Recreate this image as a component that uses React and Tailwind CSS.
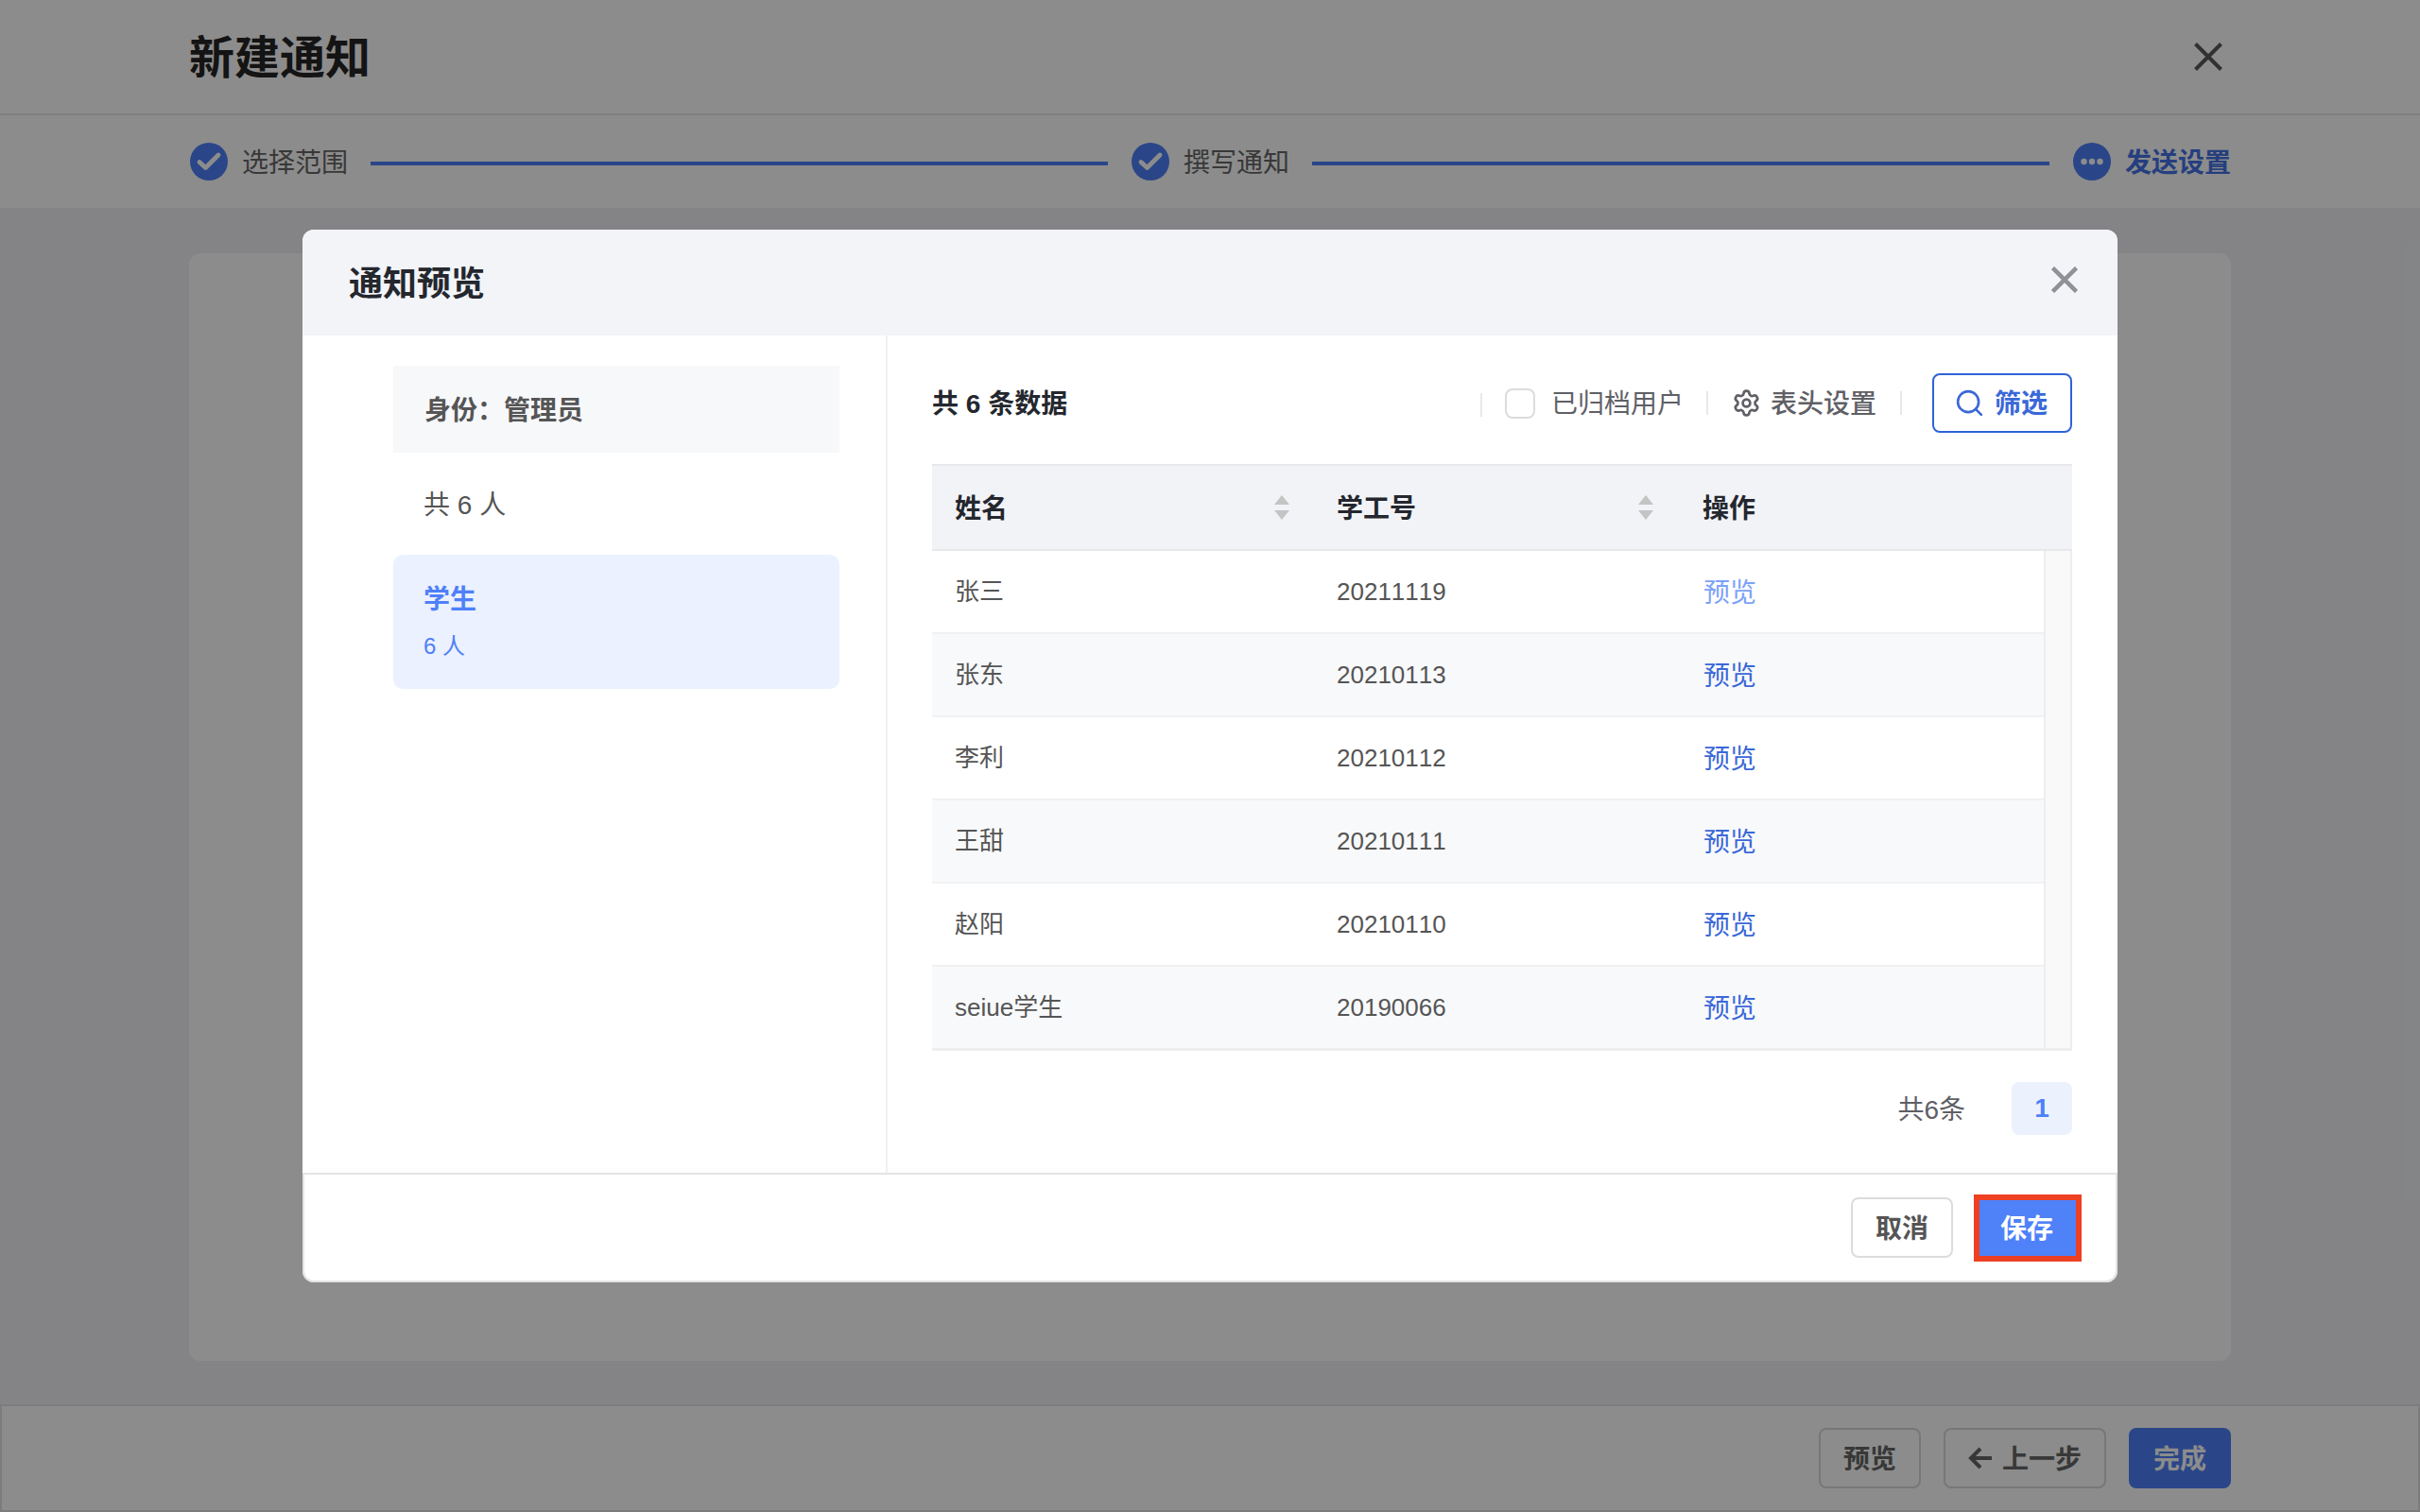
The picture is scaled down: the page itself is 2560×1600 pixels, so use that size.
import React from "react";
import { Settings, Search } from "lucide-react";

function CheckDot() {
  return (
    <svg width="40" height="40" viewBox="0 0 40 40" className="shrink-0">
      <circle cx="20" cy="20" r="20" fill="#4e80f8" />
      <path d="M10 20.5 L16.5 26.5 L30 13" fill="none" stroke="#fff" strokeWidth="4.8" strokeLinecap="round" strokeLinejoin="round" />
    </svg>
  );
}

function DotsDot() {
  return (
    <svg width="40" height="40" viewBox="0 0 40 40" className="shrink-0">
      <circle cx="20" cy="20" r="20" fill="#4e80f8" />
      <circle cx="11.5" cy="20" r="3.2" fill="#fff" />
      <circle cx="20" cy="20" r="3.2" fill="#fff" />
      <circle cx="28.5" cy="20" r="3.2" fill="#fff" />
    </svg>
  );
}

function Cross({ size, color, width }) {
  return (
    <svg width={size} height={size} viewBox={`0 0 ${size} ${size}`} className="shrink-0">
      <path d={`M1.5 1.5 L${size - 1.5} ${size - 1.5} M${size - 1.5} 1.5 L1.5 ${size - 1.5}`} stroke={color} strokeWidth={width} fill="none" />
    </svg>
  );
}

function SortIcon() {
  return (
    <svg width="16" height="26" viewBox="0 0 16 26" className="shrink-0">
      <path d="M8 0 L16 10 L0 10 Z" fill="#c4c4c4" />
      <path d="M8 26 L16 16 L0 16 Z" fill="#c4c4c4" />
    </svg>
  );
}

const rows = [
  ["张三", "20211119"],
  ["张东", "20210113"],
  ["李利", "20210112"],
  ["王甜", "20210111"],
  ["赵阳", "20210110"],
  ["seiue学生", "20190066"],
];

export default function App() {
  return (
    <div lang="zh-CN" className="font-[Liberation_Sans,Noto_Sans_CJK_SC,sans-serif] [font-kerning:none] relative h-[1600px] w-[2560px] overflow-hidden flex flex-col bg-white">
      {/* page header */}
      <div className="h-[122px] shrink-0 border-b-2 border-[#e7e7e7] flex items-center justify-between pl-[200px] pr-[209px]">
        <div className="pt-[3px] text-[48px] leading-none font-bold text-[#262626]">新建通知</div>
        <Cross size={30} color="#5a5a5a" width={4} />
      </div>

      {/* steps */}
      <div className="h-[98px] shrink-0 flex items-center pl-[201px] pr-[200px]">
        <CheckDot />
        <span className="ml-[15px] pt-[3px] text-[28px] text-[#666] whitespace-nowrap">选择范围</span>
        <div className="flex-1 h-[4px] mt-[4px] ml-[24px] mr-[25px] bg-[#4e80f8]" />
        <CheckDot />
        <span className="ml-[15px] pt-[3px] text-[28px] text-[#666] whitespace-nowrap">撰写通知</span>
        <div className="flex-1 h-[4px] mt-[4px] ml-[24px] mr-[25px] bg-[#4e80f8]" />
        <DotsDot />
        <span className="ml-[15px] pt-[3px] text-[28px] font-bold text-[#4474e6] whitespace-nowrap">发送设置</span>
      </div>

      {/* main */}
      <div className="flex-1 bg-[#f0f1f4] px-[200px] pt-[48px] pb-[46px]">
        <div className="h-full bg-white rounded-[12px]" />
      </div>

      {/* bottom bar */}
      <div className="h-[114px] shrink-0 border-2 border-[#e2e2e2] flex items-center justify-end gap-[24px] pr-[198px]">
        <div className="w-[108px] h-[64px] pt-[3px] rounded-[8px] border-2 border-[#d9d9d9] flex items-center justify-center text-[28px] font-bold text-[#666]">预览</div>
        <div className="w-[172px] h-[64px] rounded-[8px] border-2 border-[#d9d9d9] flex items-center justify-center gap-[10px] text-[28px] font-bold text-[#666]">
          <svg width="26" height="26" viewBox="0 0 26 26" className="shrink-0">
            <path d="M13 3 L3 13 L13 23 M3 13 L25 13" fill="none" stroke="#666" strokeWidth="4" />
          </svg>
          <span className="pt-[3px]">上一步</span>
        </div>
        <div className="w-[108px] h-[64px] pt-[3px] rounded-[8px] bg-[#4e80f8] flex items-center justify-center text-[28px] font-bold text-white">完成</div>
      </div>

      {/* overlay + modal */}
      <div className="absolute inset-0 bg-black/45 flex items-center justify-center">
        <div className="w-[1920px] h-[1114px] bg-white rounded-[12px] overflow-hidden flex flex-col">
          {/* modal head */}
          <div className="h-[112px] shrink-0 bg-[#f2f4f8] flex items-center justify-between pl-[49px] pr-[42px]">
            <div className="pt-[3px] text-[36px] leading-none font-bold text-[#24272e]">通知预览</div>
            <div className="-mt-[6px]"><Cross size={28} color="#8f9196" width={4.5} /></div>
          </div>

          {/* modal body */}
          <div className="flex-1 flex min-h-0">
            <div className="w-[619px] shrink-0 border-r-2 border-[#f0f0f2] pl-[96px] pt-[32px]">
              <div className="w-[472px] h-[92px] pt-[3px] bg-[#f7f8fa] flex items-center pl-[33px] text-[28px] font-bold text-[#555]">身份：管理员</div>
              <div className="w-[472px] h-[108px] pt-[3px] flex items-center pl-[32px] text-[28px] text-[#555]">共 6 人</div>
              <div className="w-[472px] h-[142px] rounded-[10px] bg-[#ebf1fe] pl-[32px] pt-[28px]">
                <div className="text-[28px] leading-[40px] font-bold text-[#4e80f8]">学生</div>
                <div className="mt-[12px] text-[24px] leading-[34px] text-[#4e80f8]">6 人</div>
              </div>
            </div>

            <div className="flex-1 pl-[47px] pr-[48px] pt-[40px]">
              {/* toolbar */}
              <div className="h-[63px] flex items-center justify-between">
                <div className="pt-[3px] text-[28px] font-bold text-[#24272e]">共 6 条数据</div>
                <div className="flex items-center">
                  <div className="w-[2px] h-[25px] bg-[#e8e8e8] mt-[4px]" />
                  <div className="ml-[24px] w-[32px] h-[32px] rounded-[8px] border-2 border-[#dcdcdc] bg-white" />
                  <span className="ml-[17px] pt-[3px] text-[28px] text-[#5f6066] whitespace-nowrap">已归档用户</span>
                  <div className="ml-[24px] w-[2px] h-[25px] bg-[#e8e8e8]" />
                  <Settings size={31} strokeWidth={2.1} color="#5f6066" className="ml-[25px] shrink-0" />
                  <span className="ml-[10px] pt-[3px] text-[28px] font-medium text-[#5f6066] whitespace-nowrap">表头设置</span>
                  <div className="ml-[25px] w-[2px] h-[25px] bg-[#e8e8e8]" />
                  <div className="ml-[32px] w-[148px] h-[63px] rounded-[8px] border-2 border-[#2f63d6] flex items-center pl-[21px] gap-[10px]">
                    <Search size={33} strokeWidth={1.9} color="#3a68d8" className="shrink-0" />
                    <span className="pt-[3px] text-[28px] font-bold text-[#3a68d8]">筛选</span>
                  </div>
                </div>
              </div>

              {/* table */}
              <div className="mt-[33px] w-[1206px]">
                <div className="h-[92px] bg-[#f2f3f7] border-y-2 border-[#e8e8ea] flex items-center text-[28px] font-bold text-[#24272e]">
                  <div className="w-[404px] pl-[24px] pr-[26px] flex items-center justify-between">
                    <span className="pt-[3px]">姓名</span>
                    <SortIcon />
                  </div>
                  <div className="w-[388px] pl-[24px] pr-[29px] flex items-center justify-between">
                    <span className="pt-[3px]">学工号</span>
                    <SortIcon />
                  </div>
                  <div className="pl-[23px] pt-[3px]">操作</div>
                </div>
                <div className="flex border-b-[3px] border-[#eeeef0]">
                  <div className="w-[1176px]">
                    {rows.map((r, i) => (
                      <div key={r[1]} className={`flex items-center text-[26px] text-[#555] ${i < 5 ? "h-[88px] border-b-2 border-[#f0f1f3]" : "h-[86px]"} ${i % 2 === 1 ? "bg-[#f8f9fb]" : "bg-white"}`}>
                        <div className="w-[404px] pl-[24px]">{r[0]}</div>
                        <div className="w-[388px] pl-[24px]">{r[1]}</div>
                        <div className={`pl-[24px] pt-[3px] text-[28px] ${i === 0 ? "text-[#7ba1f9]" : "text-[#3a68d8]"}`}>预览</div>
                      </div>
                    ))}
                  </div>
                  <div className="w-[30px] border-x-2 border-[#eeeef0] bg-[#f9f9f9]" />
                </div>
              </div>

              {/* pagination */}
              <div className="mt-[33px] flex items-center justify-end gap-[49px] text-[28px]">
                <span className="pt-[3px] text-[#5f6066]">共6条</span>
                <div className="w-[64px] h-[56px] rounded-[8px] bg-[#ebf2fe] flex items-center justify-center font-bold text-[#4e80f8]">1</div>
              </div>
            </div>
          </div>

          {/* modal footer */}
          <div className="h-[116px] shrink-0 border-2 border-[#e4e4e6] rounded-b-[12px] flex items-center justify-end gap-[22px] pr-[36px]">
            <div className="w-[108px] h-[64px] pt-[3px] rounded-[8px] border-2 border-[#dcdcdc] flex items-center justify-center text-[28px] font-bold text-[#555]">取消</div>
            <div className="w-[114px] h-[71px] pt-[3px] pr-[2px] border-[6px] border-[#ee4023] bg-[#4f81f9] flex items-center justify-center text-[28px] font-bold text-white">保存</div>
          </div>
        </div>
      </div>
    </div>
  );
}
